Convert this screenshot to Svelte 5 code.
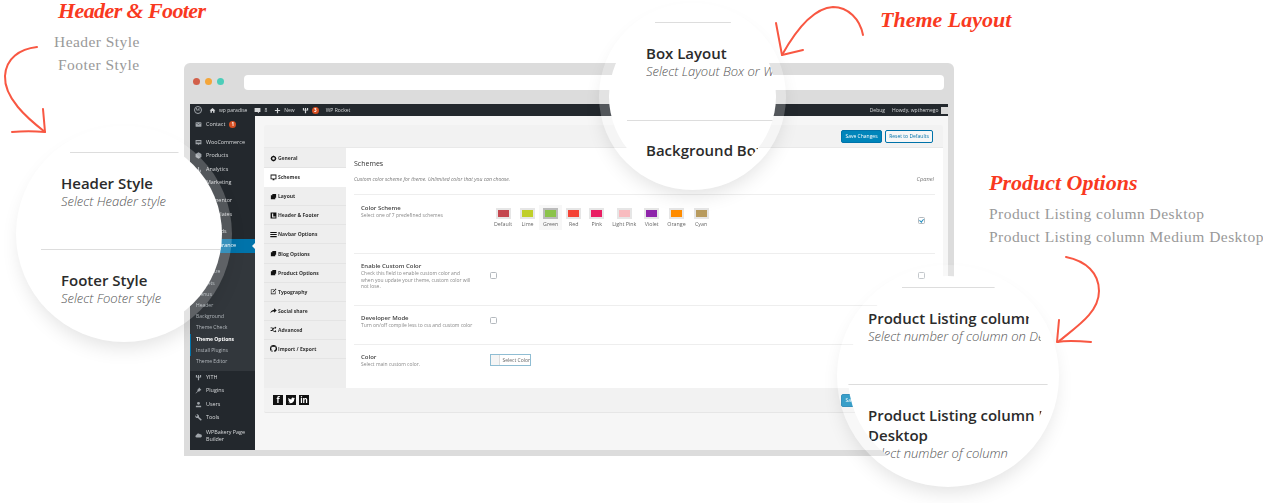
<script>
  const icons = {
    mail: "M20 4H4c-1.1 0-2 .9-2 2v12c0 1.100.9 2 2 2h16c1.100 0 2-.9 2-2V6c0-1.100-.9-2-2-2zm0 4l-8 5-8-5V6l8 5 8-5v2z",
    home: "M10 20v-6h4v6h5v-8h3L12 3 2 12h3v8z",
    comment: "M2 3h20v14h-5v4l-5-4H2z",
    plus: "M21 14h-7v7h-4v-7H3v-4h7V3h4v7h7z",
    woo: "M2 3h20v15h-8l-2 3-2-3H2zm3 5v2h14V8zm0 4v2h14v-2z",
    cube: "M12 1l10 5.500v11L12 23 2 17.500v-11z",
    bars: "M4 21V10h4v11zm6 0V3h4v18zm6 0v-8h4v8z",
    horn: "M3 9h5l12-6v16L8 14H7l1 7H5l-1-7H3z",
    layers: "M8 3h13v13h-3v5H3V8h5z",
    wrench: "M22.700 19l-9.100-9.100c.9-2.300.4-5-1.500-6.900-2-2-5-2.400-7.400-1.300L9 6 6 9 1.600 4.700C.4 7.100.9 10.100 2.900 12.100c1.900 1.900 4.600 2.400 6.900 1.500l9.100 9.100c.4.4 1 .4 1.400 0l2.300-2.300c.5-.4.5-1.100.1-1.400z",
    plug: "M14 2l-3 6-4 2 2.500 2.500L2 21l1 1 8.500-7.500L14 17l2-4 6-3z",
    user: "M12 3a5 5 0 1 1 0 10 5 5 0 0 1 0-10zM3 16h18v5H3z",
    cloud: "M19 19H6a4.500 4.500 0 0 1-1-8.900A6.500 6.500 0 0 1 17 8a5.500 5.500 0 0 1 2 11z",
    yith: "M3 3h4v6h3V3h4v6h3V3h4v9h-7v9h-4v-9H3z",
    gear: "M12 1l2 3 3-1 1 3 3 1-1 3 3 2-3 2 1 3-3 1-1 3-3-1-2 3-2-3-3 1-1-3-3-1 1-3-3-2 3-2-1-3 3-1 1-3 3 1zm0 6.500a4.500 4.500 0 1 0 0 9 4.500 4.500 0 0 0 0-9z",
    monitor: "M2 2h20v16h-7v3H9v-3H2zm3 3v10h14V5z",
    header: "M2 2h20v20H2zm5 3v14h12v-4h-8V5z",
    navbar: "M1 3h22v4H1zm0 7h22v4H1zm0 7h22v4H1z",
    edit: "M3 5h11v2H5v12h12v-8h2v10H3zM20 2l2 2-10 10-3 1 1-3z",
    share: "M14 4l9 8-9 8v-5C8 15 4 17 1 21c1-6 5-11 13-12z",
    random: "M17 2l5 4-5 4V8h-2l-7 9H2v-3h4l7-9h4zM2 5h6l2.500 3L9 10.500 7 8H2zm15 9l5 4-5 4v-2h-4l-2.500-3 1.500-2.500 2 2.500h3z",
    github: "M12 .3a12 12 0 0 0-3.800 23.400c.6.1.8-.3.8-.6v-2c-3.300.7-4-1.600-4-1.600-.6-1.400-1.400-1.800-1.400-1.800-1-.7.1-.7.1-.7 1.200 0 1.900 1.200 1.900 1.200 1 1.800 2.800 1.300 3.500 1 0-.8.4-1.300.7-1.600-2.700-.3-5.500-1.300-5.500-6 0-1.200.5-2.300 1.300-3.100-.2-.4-.6-1.600 0-3.200 0 0 1-.3 3.400 1.200a11.500 11.500 0 0 1 6 0c2.300-1.500 3.300-1.200 3.300-1.200.6 1.600.2 2.800 0 3.200.9.8 1.300 1.900 1.300 3.200 0 4.600-2.800 5.600-5.500 5.900.5.4.9 1 .9 2.200v3.300c0 .3.1.7.8.6A12 12 0 0 0 12 .3",
    twitter: "M24 4.600a10 10 0 0 1-2.800.8 4.900 4.900 0 0 0 2.100-2.700c-.9.6-2 1-3.100 1.200a4.900 4.900 0 0 0-8.400 4.500A14 14 0 0 1 1.600 3.200a4.900 4.900 0 0 0 1.500 6.600c-.8 0-1.600-.2-2.200-.6v.1a4.900 4.900 0 0 0 3.900 4.800c-.7.2-1.500.2-2.200.1a4.900 4.900 0 0 0 4.600 3.400A9.900 9.900 0 0 1 0 19.500a14 14 0 0 0 7.500 2.200c9 0 14-7.500 14-14v-.6c1-.7 1.800-1.600 2.500-2.500z"
  };

  const menuTop = [
    { label: "Contact", icon: "mail", badge: "1" },
    { label: "WooCommerce", icon: "woo", sep: true },
    { label: "Products", icon: "cube" },
    { label: "Analytics", icon: "bars" },
    { label: "Marketing", icon: "horn" },
    { label: "Elementor", icon: "cube", sep: true },
    { label: "Templates", icon: "layers" },
    { label: "Uploads", icon: "cloud", sep: true }
  ];
  const subMenu = [
    { label: "Themes" },
    { label: "Customize" },
    { label: "Widgets" },
    { label: "Menus" },
    { label: "Header" },
    { label: "Background" },
    { label: "Theme Check" },
    { label: "Theme Options", current: true, mark: true },
    { label: "Install Plugins", mark: true },
    { label: "Theme Editor" }
  ];
  const menuBottom = [
    { label: "YITH", icon: "yith" },
    { label: "Plugins", icon: "plug" },
    { label: "Users", icon: "user" },
    { label: "Tools", icon: "wrench" },
    { label: "WPBakery Page Builder", icon: "cloud", tall: true }
  ];
  const tabs = [
    { label: "General", icon: "gear" },
    { label: "Schemes", icon: "monitor", active: true },
    { label: "Layout", icon: "layers" },
    { label: "Header & Footer", icon: "header" },
    { label: "Navbar Options", icon: "navbar" },
    { label: "Blog Options", icon: "layers" },
    { label: "Product Options", icon: "layers" },
    { label: "Typography", icon: "edit" },
    { label: "Social share", icon: "share" },
    { label: "Advanced", icon: "random" },
    { label: "Import / Export", icon: "github" }
  ];
  const swatches = [
    { label: "Default", color: "#c4474f" },
    { label: "Lime", color: "#c0cf2a" },
    { label: "Green", color: "#8bc34a", selected: true },
    { label: "Red", color: "#f44336" },
    { label: "Pink", color: "#e91e63" },
    { label: "Light Pink", color: "#f8bbbf" },
    { label: "Violet", color: "#8e24aa" },
    { label: "Orange", color: "#ff8c00" },
    { label: "Cyan", color: "#b89b5e" }
  ];
</script>

{#snippet icon(name)}
  <svg class="ico" viewBox="0 0 24 24" aria-hidden="true"><path d={icons[name]} /></svg>
{/snippet}

{#snippet menuRow(item)}
  <li class="menu-row" class:sep={item.sep} class:tall={item.tall}>
    {@render icon(item.icon)}
    <span>{item.label}</span>
    {#if item.badge}<b class="count">{item.badge}</b>{/if}
  </li>
{/snippet}

<div class="page">
  <section class="frame">
    <div class="chrome">
      <i class="dot red"></i><i class="dot amber"></i><i class="dot teal"></i>
      <div class="url"></div>
    </div>
    <div class="screen">
      <header class="adminbar">
        <span class="wp-logo">W</span>
        <span class="bar-item">{@render icon("home")} wp paradise</span>
        <span class="bar-item">{@render icon("comment")} 8</span>
        <span class="bar-item">{@render icon("plus")} New</span>
        <span class="bar-item">{@render icon("yith")} <b class="count">3</b></span>
        <span class="bar-item">WP Rocket</span>
        <span class="bar-right">Debug</span>
        <span class="howdy">Howdy, wpthemego <i class="avatar"></i></span>
      </header>
      <div class="desk">
        <nav class="sidebar">
          <ul>
            {#each menuTop as item}
              {@render menuRow(item)}
            {/each}
            <li class="menu-row active">{@render icon("layers")}<span>Appearance</span></li>
          </ul>
          <ul class="submenu">
            {#each subMenu as item}
              <li class:current={item.current} class:mark={item.mark}>{item.label}</li>
            {/each}
          </ul>
          <ul>
            {#each menuBottom as item}
              {@render menuRow(item)}
            {/each}
          </ul>
        </nav>
        <main class="main">
          <div class="panel">
            <div class="panel-head">
              <button class="btn primary">Save Changes</button>
              <button class="btn">Reset to Defaults</button>
            </div>
            <div class="panel-body">
              <ul class="tabs">
                {#each tabs as tab}
                  <li class:active={tab.active}>{@render icon(tab.icon)}<span>{tab.label}</span></li>
                {/each}
              </ul>
              <div class="pane">
                <div class="pane-head">
                  <h3>Schemes</h3>
                  <div class="pane-note">
                    <em>Custom color scheme for theme. Unlimited color that you can choose.</em>
                    <em class="cpanel">Cpanel</em>
                  </div>
                </div>
                <div class="row scheme">
                  <div class="label"><h4>Color Scheme</h4><p>Select one of 7 predefined schemes</p></div>
                  <div class="swatches">
                    {#each swatches as s}
                      <div class="swatch" class:selected={s.selected}>
                        <i style="background:{s.color}"></i>
                        <span>{s.label}</span>
                      </div>
                    {/each}
                  </div>
                  <input class="check on" type="checkbox" checked />
                </div>
                <div class="row custom">
                  <div class="label"><h4>Enable Custom Color</h4><p>Check this field to enable custom color and when you update your theme, custom color will not lose.</p></div>
                  <input class="check" type="checkbox" />
                  <input class="check end" type="checkbox" />
                </div>
                <div class="row devmode">
                  <div class="label"><h4>Developer Mode</h4><p>Turn on/off compile less to css and custom color</p></div>
                  <input class="check" type="checkbox" />
                </div>
                <div class="row color">
                  <div class="label"><h4>Color</h4><p>Select main custom color.</p></div>
                  <div class="picker"><i></i><span>Select Color</span></div>
                </div>
              </div>
            </div>
            <div class="panel-foot">
              <div class="social">
                <span>f</span>
                <span><svg viewBox="0 0 24 24" aria-hidden="true"><path d={icons.twitter} /></svg></span>
                <span>in</span>
              </div>
              <button class="btn primary">Save Changes</button>
            </div>
          </div>
        </main>
      </div>
    </div>
  </section>

  <div class="note note-header">
    <h2>Header &amp; Footer</h2>
    <p class="l1">Header Style</p>
    <p class="l2">Footer Style</p>
  </div>
  <div class="note note-layout"><h2>Theme Layout</h2></div>
  <div class="note note-product">
    <h2>Product Options</h2>
    <p>Product Listing column Desktop</p>
    <p>Product Listing column Medium Desktop</p>
  </div>

  <div class="ring ring-left">
    <div class="lens">
      <div class="rule a"></div>
      <div class="text"><h5>Header Style</h5><p>Select Header style</p></div>
      <div class="rule b"></div>
      <div class="text"><h5>Footer Style</h5><p>Select Footer style</p></div>
    </div>
  </div>

  <div class="ring ring-top">
    <div class="lens">
      <div class="rule a"></div>
      <div class="text"><h5>Box Layout</h5><p>Select Layout Box or Wide</p></div>
      <div class="rule b"></div>
      <div class="text second"><h5>Background Box</h5></div>
    </div>
  </div>

  <div class="ring ring-right">
    <div class="lens">
      <div class="rule a"></div>
      <div class="text"><h5>Product Listing column</h5><p>Select number of column on Desktop</p></div>
      <div class="rule b"></div>
      <div class="text second"><div class="wide"><h5>Product Listing column Medium Desktop</h5><p>Select number of column</p></div></div>
    </div>
  </div>

  <svg class="arrows" viewBox="0 0 1263 503" aria-hidden="true">
    <defs>
      <filter id="rough" x="-5%" y="-5%" width="110%" height="110%">
        <feTurbulence type="fractalNoise" baseFrequency="0.5" numOctaves="2" seed="4" />
        <feDisplacementMap in="SourceGraphic" scale="1.400" />
      </filter>
    </defs>
    <g filter="url(#rough)">
      <path d="M37 47C20 49 6 58 5 76c-1 22 22 42 40 56" />
      <path d="M43 109l2 23M45 132c-11-1-22-1-33 0" />
      <path d="M863 35C860 19 848 7 833 7 814 8 796 30 782 55" />
      <path d="M776 23l6 32M782 55l21-5" />
      <path d="M1066 257c20 4 33 16 33 34 0 22-23 36-41 51" />
      <path d="M1059 320l-2 22M1057 342c11-2 23-1 34 0" />
    </g>
  </svg>
</div>

<style>
  :global(body) {
    background: #fff;
  }

  .page {
    position: relative;
    width: 1263px;
    height: 503px;
    padding: 63px 0 0 184px;
    box-sizing: border-box;
    overflow: hidden;
    background: #fff;
    font-family: "Open Sans", sans-serif;
    color: #444;
  }

  ul {
    margin: 0;
    padding: 0;
    list-style: none;
  }

  h2, h3, h4, h5, p {
    margin: 0;
  }

  /* browser mockup */
  .frame {
    width: 770px;
    height: 393px;
    padding: 0 6px 6px;
    box-sizing: border-box;
    display: flex;
    flex-direction: column;
    background: #dcdcdc;
    border-radius: 6px 6px 0 0;
  }

  .chrome {
    height: 41px;
    flex: none;
    display: flex;
    align-items: center;
    gap: 5px;
    padding: 0 0 5px 3px;
    box-sizing: border-box;
  }

  .dot {
    width: 7px;
    height: 7px;
    border-radius: 50%;
  }
  .red { background: #d2604a; }
  .amber { background: #f4a63a; }
  .teal { background: #4ccdb9; }

  .url {
    width: 700px;
    height: 15px;
    margin: 3px 0 0 15px;
    background: #fff;
    border-radius: 4px;
  }

  .screen {
    flex: 1;
    min-height: 0;
    display: flex;
    flex-direction: column;
    overflow: hidden;
    background: #f6f6f6;
    filter: blur(.25px);
  }

  .adminbar {
    height: 12px;
    flex: none;
    display: flex;
    align-items: center;
    gap: 7px;
    padding-left: 4px;
    background: #23282d;
    color: #d5d7d9;
    font-size: 5px;
  }

  .wp-logo {
    width: 8px;
    height: 8px;
    border: 1px solid #a0a5aa;
    box-sizing: border-box;
    border-radius: 50%;
    color: #a0a5aa;
    font: bold 5px/6px "Liberation Serif", serif;
    text-align: center;
  }

  .bar-item {
    display: flex;
    align-items: center;
    gap: 3px;
  }

  .bar-right {
    margin-left: auto;
  }

  .howdy {
    display: flex;
    align-items: center;
    gap: 2.500px;
  }

  .avatar {
    width: 7px;
    height: 7px;
    background: #d8d8d8;
  }

  .ico {
    width: 7px;
    height: 7px;
    flex: none;
    fill: currentColor;
  }

  .desk {
    flex: 1;
    min-height: 0;
    display: flex;
  }

  .sidebar {
    width: 65px;
    flex: none;
    padding-top: 1.500px;
    background: #23282d;
    color: #d9dbdd;
    font-size: 5.400px;
    line-height: 7px;
    overflow: hidden;
  }

  .menu-row {
    position: relative;
    min-height: 13.500px;
    display: flex;
    align-items: center;
    gap: 4px;
    padding: 0 5px;
    box-sizing: border-box;
  }
  .menu-row .ico {
    color: #a0a5aa;
  }
  .menu-row.sep {
    margin-top: 4.400px;
  }
  .menu-row.tall {
    min-height: 22px;
  }
  .menu-row.active {
    height: 14px;
    background: #0073aa;
    color: #fff;
  }
  .menu-row.active .ico {
    color: #fff;
  }
  .menu-row.active::after {
    content: "";
    position: absolute;
    right: 0;
    top: 4px;
    border: 3px solid transparent;
    border-right-color: #f6f6f6;
    border-left-width: 0;
  }

  .count {
    width: 7px;
    height: 7px;
    border-radius: 50%;
    background: #d54e21;
    color: #fff;
    font-size: 4.500px;
    line-height: 7px;
    text-align: center;
  }

  .submenu {
    height: 118px;
    padding: 2.500px 0 0;
    box-sizing: border-box;
    background: #32373c;
    color: #b4b9be;
    font-size: 5px;
    line-height: 11.200px;
  }
  .submenu li {
    padding-left: 6px;
  }
  .submenu .current {
    color: #fff;
    font-weight: 700;
  }
  .submenu .mark {
    padding-left: 5px;
    border-left: 1px solid #0073aa;
  }

  .main {
    flex: 1;
    min-width: 0;
    padding: 9px 5px 0 9px;
  }

  .panel {
    border-radius: 2px;
    background: #f2f2f2;
  }

  .panel-head {
    height: 23px;
    display: flex;
    justify-content: flex-end;
    align-items: center;
    gap: 3px;
    padding-right: 10px;
    border-bottom: 1px solid #e9e9e9;
    box-sizing: border-box;
  }

  .btn {
    height: 13px;
    width: 48px;
    padding: 0;
    border: 1px solid #0073aa;
    border-radius: 2px;
    background: #f7f7f7;
    color: #0073aa;
    font: 5px "Open Sans", sans-serif;
  }
  .btn.primary {
    width: 41px;
    background: #0085ba;
    color: #fff;
  }

  .panel-body {
    display: flex;
    height: 240px;
    background: #fff;
  }

  .tabs {
    width: 82px;
    flex: none;
    padding-top: 1px;
    background: #eeeeee;
  }
  .tabs li {
    height: 19.100px;
    display: flex;
    align-items: center;
    gap: 1.500px;
    padding-left: 5.500px;
    box-sizing: border-box;
    border-bottom: 1px solid #e4e4e4;
    color: #333;
    font-size: 5px;
    font-weight: 700;
  }
  .tabs li.active {
    background: #fff;
    border-bottom-color: #fff;
  }
  .tabs .ico {
    color: #111;
  }

  .pane {
    flex: 1;
    min-width: 0;
    padding: 0 8px 0 8px;
  }

  .pane-head {
    height: 46px;
    box-sizing: border-box;
    padding-top: 11px;
  }
  h3 {
    font-size: 7px;
    line-height: 9px;
    font-weight: 400;
    color: #333;
  }
  .pane-note {
    display: flex;
    justify-content: space-between;
    margin-top: 8px;
    padding-right: 1px;
    font-size: 5.100px;
    line-height: 7px;
    color: #777;
  }
  .cpanel {
    font-size: 5.700px;
  }

  .row {
    display: flex;
    align-items: flex-start;
    box-sizing: border-box;
    padding: 9px 10px 0 7px;
    border-top: 1px solid #eee;
    position: relative;
  }
  .row.scheme { height: 59px; padding-top: 9.500px; }
  .row.custom { height: 52px; }
  .row.devmode { height: 39px; }
  .row.color { height: 44px; }

  .label {
    width: 115px;
    margin-right: 14px;
    flex: none;
  }
  h4 {
    font-size: 6px;
    line-height: 7px;
    font-weight: 600;
    color: #444;
  }
  .label p {
    max-width: 110px;
    font-size: 4.950px;
    line-height: 6.500px;
    color: #888;
  }
  .row.devmode .label p {
    max-width: none;
    white-space: nowrap;
  }

  .check {
    appearance: none;
    width: 7px;
    height: 7px;
    margin: 0;
    flex: none;
    border: 1px solid #b4b9be;
    border-radius: 1.500px;
    background: #fff;
    box-sizing: border-box;
  }
  .row.custom > .check { margin-top: 8.500px; }
  .row.devmode > .check { margin-top: 1.500px; }
  .row.scheme > .check { margin-top: 12px; margin-left: auto; position: relative; }
  .check.end { margin-left: auto; }
  .check.on::after {
    content: "";
    position: absolute;
    left: 1.300px;
    top: .3px;
    width: 1.600px;
    height: 3.300px;
    border: solid #1e8cbe;
    border-width: 0 1px 1px 0;
    transform: rotate(40deg);
  }

  .swatches {
    display: flex;
  }
  .swatch {
    display: flex;
    flex-direction: column;
    align-items: center;
    gap: 2.500px;
    padding: 3px 4px 3px;
    font-size: 5.300px;
    line-height: 6px;
    color: #666;
  }
  .swatch i {
    width: 11px;
    height: 7px;
    border: 2px solid #e6e6e6;
  }
  .swatch.selected {
    background: #f7f7f7;
  }
  .swatch.selected i {
    border-color: #bbb;
  }

  .picker {
    width: 41px;
    height: 12px;
    display: flex;
    box-sizing: border-box;
    border: 1px solid #8fbdd3;
    background: #fff;
    font-size: 5px;
    line-height: 10px;
    color: #666;
  }
  .picker i {
    width: 12px;
    background: #f5f5f5;
    border-right: 1px solid #ddd;
  }
  .picker span {
    padding-left: 2px;
    white-space: nowrap;
  }

  .panel-foot {
    height: 25px;
    display: flex;
    justify-content: space-between;
    align-items: center;
    padding: 0 61px 0 9px;
    box-sizing: border-box;
    border-bottom: 1px solid #e6e6e6;
    border-radius: 0 0 2px 2px;
  }
  .social {
    display: flex;
    gap: 3px;
  }
  .social span {
    width: 10px;
    height: 10px;
    display: flex;
    align-items: center;
    justify-content: center;
    background: #111;
    color: #fff;
    font-size: 8px;
    font-weight: 700;
    line-height: 10px;
  }
  .social svg {
    width: 7px;
    height: 7px;
    fill: #fff;
  }

  /* side notes */
  .note {
    position: absolute;
    font-family: "Liberation Serif", serif;
    color: #999;
  }
  .note h2 {
    color: #f9391f;
    font-size: 22px;
    line-height: 26px;
    font-style: italic;
    font-weight: 700;
    white-space: nowrap;
  }
  .note p {
    font-size: 15.500px;
    line-height: 23px;
    letter-spacing: .45px;
    white-space: nowrap;
  }
  .note-header { left: 58px; top: 0; }
  .note-header h2 { line-height: 22px; letter-spacing: -.6px; }
  .note-header .l1 { margin: 8px 0 0 -4px; }
  .note-layout { left: 880px; top: 7px; }
  .note-product { left: 989px; top: 170px; }
  .note-product p:first-of-type { margin-top: 6px; }

  /* magnifier circles */
  .ring {
    position: absolute;
    padding: 10px;
    box-sizing: border-box;
    border-radius: 50%;
    background: rgba(255, 255, 255, .22);
    box-shadow: 0 10px 20px -5px rgba(0, 0, 0, .12);
  }
  .lens {
    position: relative;
    width: 100%;
    height: 100%;
    border-radius: 50%;
    background: #fff;
    overflow: hidden;
  }
  .rule {
    height: 1px;
    background: #ddd;
  }
  .text {
    overflow: hidden;
  }
  .text p {
    font-size: 13px;
    line-height: 17px;
    font-style: italic;
    font-weight: 300;
    color: #555;
    white-space: nowrap;
  }
  h5 {
    font-size: 15px;
    line-height: 20px;
    font-weight: 600;
    color: #2b2b2b;
  }
  .text h5 {
    white-space: nowrap;
  }

  .ring-left { left: 16px; top: 126px; width: 216px; height: 216px; }
  .ring-left .rule.a { margin: 16px 0 0 44px; width: 109px; }
  .ring-left .rule.b { margin: 0 0 0 15px; }
  .ring-left .text { padding-left: 35px; height: 96px; box-sizing: border-box; padding-top: 20px; }

  .ring-top { left: 599px; top: 3px; width: 187px; height: 187px; }
  .ring-top .rule.a { margin: 9px 0 0 46px; width: 76px; }
  .ring-top .rule.b { margin: 0 0 0 18px; }
  .ring-top .text { margin-left: 37px; width: 127px; height: 97px; box-sizing: border-box; padding-top: 20px; }
  .ring-top .text.second { width: 114px; padding-top: 19px; }

  .ring-right { left: 837px; top: 265px; width: 222px; height: 222px; }
  .ring-right .lens { width: 200px; height: 200px; margin: 1px; }
  .ring-right .rule.a { margin: 11px 0 0 54px; width: 93px; }
  .ring-right .text { margin-left: 20px; width: 173px; height: 96px; box-sizing: border-box; padding-top: 20px; }
  .ring-right .text h5 { width: 163px; overflow: hidden; }
  .ring-right .text.second { width: 174px; height: auto; }
  .ring-right .text.second h5 { width: auto; white-space: normal; overflow: visible; }
  .wide { width: 260px; }

  .arrows {
    position: absolute;
    left: 0;
    top: 0;
    width: 1263px;
    height: 503px;
    pointer-events: none;
    fill: none;
    stroke: #f8452e;
    stroke-width: 2;
    stroke-linecap: round;
    stroke-linejoin: round;
    opacity: .9;
  }
</style>
